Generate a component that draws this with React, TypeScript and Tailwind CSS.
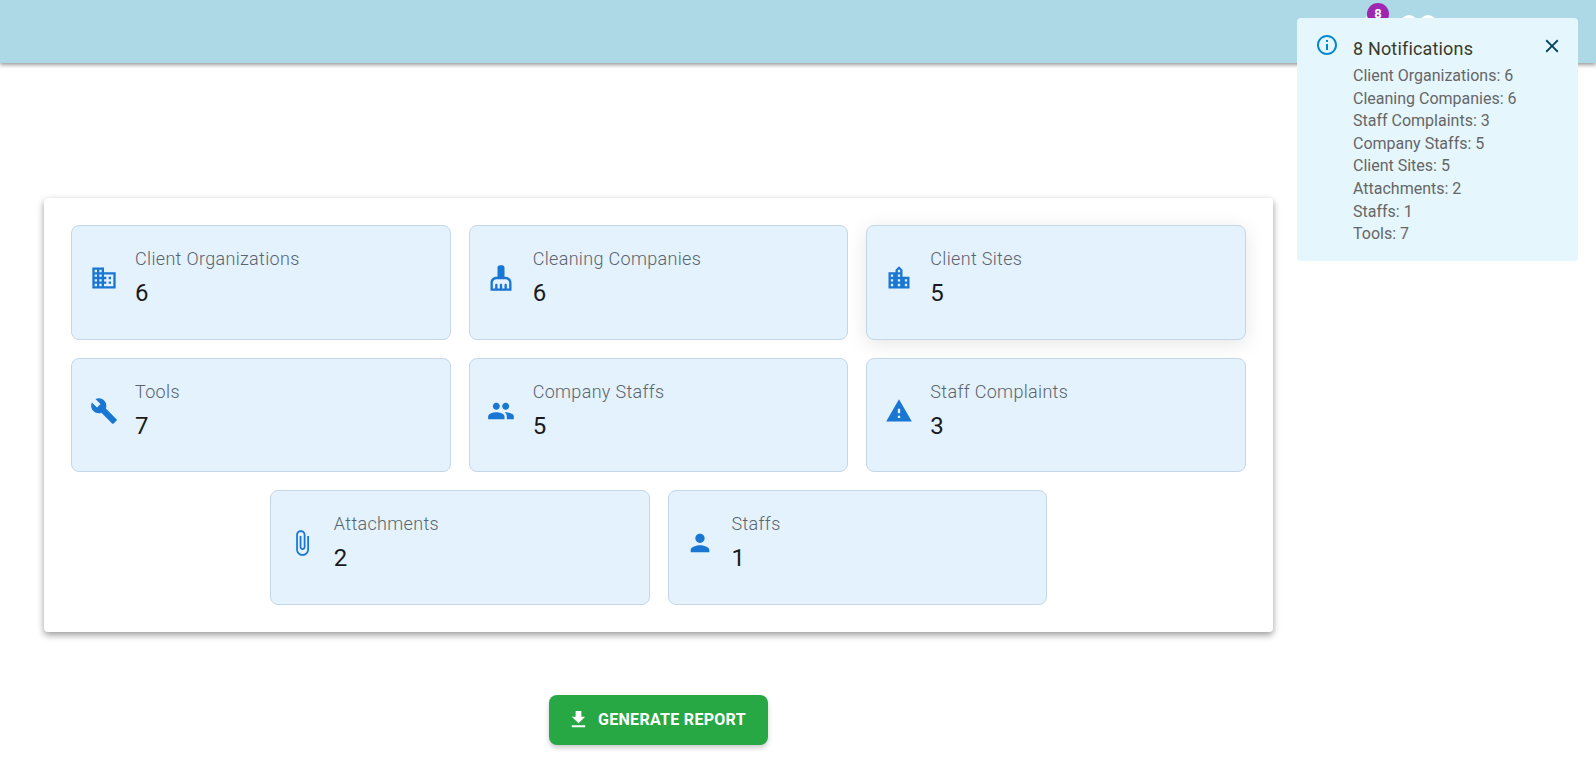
const roboto = '[font-family:Roboto,"Liberation_Sans",sans-serif]';

const paths = {
  business:
    'M12 7V3H2v18h20V7H12zM6 19H4v-2h2v2zm0-4H4v-2h2v2zm0-4H4V9h2v2zm0-4H4V5h2v2zm4 12H8v-2h2v2zm0-4H8v-2h2v2zm0-4H8V9h2v2zm0-4H8V5h2v2zm10 12h-8v-2h2v-2h-2v-2h2v-2h-2V9h8v10zm-2-8h-2v2h2v-2zm0 4h-2v2h2v-2z',
  cleaning:
    'M16 11h-1V3c0-1.1-.9-2-2-2h-2c-1.1 0-2 .9-2 2v8H8c-2.76 0-5 2.24-5 5v7h18v-7c0-2.76-2.24-5-5-5zm3 10h-2v-3c0-.55-.45-1-1-1s-1 .45-1 1v3h-2v-3c0-.55-.45-1-1-1s-1 .45-1 1v3H9v-3c0-.55-.45-1-1-1s-1 .45-1 1v3H5v-5c0-1.65 1.35-3 3-3h8c1.65 0 3 1.35 3 3v5z',
  city:
    'M15 11V5l-3-3-3 3v2H3v14h18V11h-6zm-8 8H5v-2h2v2zm0-4H5v-2h2v2zm0-4H5V9h2v2zm6 8h-2v-2h2v2zm0-4h-2v-2h2v2zm0-4h-2V9h2v2zm0-4h-2V5h2v2zm6 12h-2v-2h2v2zm0-4h-2v-2h2v2z',
  build:
    'M22.7 19l-9.1-9.1c.9-2.3.4-5-1.5-6.9-2-2-5-2.4-7.4-1.3L9 6 6 9 1.6 4.7C.4 7.1.9 10.1 2.9 12.1c1.9 1.9 4.6 2.4 6.9 1.5l9.1 9.1c.4.4 1 .4 1.4 0l2.3-2.3c.5-.4.5-1.1.1-1.4z',
  people:
    'M16 11c1.66 0 2.99-1.34 2.99-3S17.66 5 16 5c-1.66 0-3 1.34-3 3s1.34 3 3 3zm-8 0c1.66 0 2.99-1.34 2.99-3S9.66 5 8 5C6.34 5 5 6.34 5 8s1.34 3 3 3zm0 2c-2.33 0-7 1.17-7 3.5V19h14v-2.5c0-2.33-4.67-3.5-7-3.5zm8 0c-.29 0-.62.02-.97.05 1.16.84 1.97 1.97 1.97 3.45V19h6v-2.5c0-2.33-4.67-3.5-7-3.5z',
  warning: 'M1 21h22L12 2 1 21zm12-3h-2v-2h2v2zm0-4h-2v-4h2v4z',
  attach:
    'M16.5 6v11.5c0 2.21-1.79 4-4 4s-4-1.79-4-4V5c0-1.38 1.12-2.5 2.5-2.5s2.5 1.12 2.5 2.5v10.5c0 .55-.45 1-1 1s-1-.45-1-1V6H10v9.5c0 1.38 1.12 2.5 2.5 2.5s2.5-1.12 2.5-2.5V5c0-2.21-1.79-4-4-4S7 2.79 7 5v12.5c0 3.04 2.46 5.5 5.5 5.5s5.5-2.46 5.5-5.5V6h-1.5z',
  person: 'M12 12c2.21 0 4-1.79 4-4s-1.79-4-4-4-4 1.79-4 4 1.79 4 4 4zm0 2c-2.67 0-8 1.34-8 4v2h16v-2c0-2.66-5.33-4-8-4z',
  download: 'M19 9h-4V3H9v6H5l7 7 7-7zM5 18v2h14v-2H5z',
  info: 'M11 7h2v2h-2zm0 4h2v6h-2zm1-9C6.48 2 2 6.48 2 12s4.48 10 10 10 10-4.48 10-10S17.52 2 12 2zm0 18c-4.41 0-8-3.59-8-8s3.59-8 8-8 8 3.59 8 8-3.59 8-8 8z',
  close: 'M19 6.41 17.59 5 12 10.59 6.41 5 5 6.41 10.59 12 5 17.59 6.41 19 12 13.41 17.59 19 19 17.59 13.41 12z',
  bell: 'M12 22c1.1 0 2-.9 2-2h-4c0 1.1.9 2 2 2zm6-6v-5c0-3.07-1.63-5.64-4.5-6.32V4c0-.83-.67-1.5-1.5-1.5s-1.5.67-1.5 1.5v.68C7.64 5.36 6 7.92 6 11v5l-2 2v1h16v-1l-2-2z',
};

function Icon({ d, className }: { d: string; className: string }) {
  return (
    <svg viewBox="0 0 24 24" fill="currentColor" className={className}>
      <path d={d} />
    </svg>
  );
}

const stats = [
  { label: 'Client Organizations', value: 6, icon: paths.business },
  { label: 'Cleaning Companies', value: 6, icon: paths.cleaning },
  { label: 'Client Sites', value: 5, icon: paths.city, hovered: true },
  { label: 'Tools', value: 7, icon: paths.build },
  { label: 'Company Staffs', value: 5, icon: paths.people },
  { label: 'Staff Complaints', value: 3, icon: paths.warning },
  { label: 'Attachments', value: 2, icon: paths.attach },
  { label: 'Staffs', value: 1, icon: paths.person },
];

const notifications = [
  'Client Organizations: 6',
  'Cleaning Companies: 6',
  'Staff Complaints: 3',
  'Company Staffs: 5',
  'Client Sites: 5',
  'Attachments: 2',
  'Staffs: 1',
  'Tools: 7',
];

function StatCard({ label, value, icon, hovered }: { label: string; value: number; icon: string; hovered?: boolean }) {
  return (
    <div
      className={`flex h-[114.5px] w-[calc((100%-36px)/3)] items-center rounded-lg border border-[#c5d6e6] bg-[#e3f2fd] pt-[18px] pb-[26px] pl-[17.5px] ${
        hovered ? 'shadow-[0_4px_20px_rgba(0,0,0,0.1)]' : ''
      }`}
    >
      <Icon d={icon} className="mr-[17.5px] h-7 w-7 shrink-0 text-[#1976d2]" />
      <div>
        <div className="mt-[1px] text-[18px] leading-[26px] font-light tracking-[0.32px] text-[#5a646c]">{label}</div>
        <div className="mt-[3px] text-2xl leading-9 text-[#1a1a1a]">{value}</div>
      </div>
    </div>
  );
}

export default function App() {
  return (
    <div className={`relative min-h-[764px] bg-white ${roboto}`}>
      <header className="flex h-[63px] justify-end bg-[#add8e6] pt-[14px] pr-[159px] shadow-[0_2px_4px_rgba(0,0,0,0.4)]">
        <div className="relative h-6 w-6 text-white">
          <Icon d={paths.bell} className="h-6 w-6" />
          <span className="absolute -top-[11px] left-[12px] flex h-[22px] w-[22px] items-center justify-center rounded-full bg-[#9c27b0] text-[13px] font-bold text-white">
            8
          </span>
        </div>
        <div className="mt-[1px] ml-[21px] h-[18px] w-[18px] rounded-full bg-white" />
        <div className="mt-[1px] ml-[1px] h-[18px] w-[18px] rounded-full bg-white" />
      </header>

      <main className="ml-[44px] flex w-[1229px] flex-col items-center pt-[135px]">
        <section className="flex w-full flex-wrap justify-center gap-[18px] rounded-[4px] bg-white p-[27px] shadow-[0_3px_7px_rgba(0,0,0,0.4)]">
          {stats.map((s) => (
            <StatCard key={s.label} {...s} />
          ))}
        </section>

        <button className="mt-[63px] flex h-[50px] w-[219px] items-center rounded-lg bg-[#28a745] pl-[18px] text-base font-bold tracking-[0.3px] text-white shadow-[0_3px_5px_rgba(0,0,0,0.2)]">
          <Icon d={paths.download} className="mr-2 h-[23px] w-[23px]" />
          GENERATE REPORT
        </button>
      </main>

      <aside className="absolute top-[18px] right-[18px] flex w-[281px] rounded-[4px] bg-[#e5f6fd] pt-[16px] pr-[15px] pb-[15px] pl-[18px]">
        <Icon d={paths.info} className="mr-[14px] -mt-[1px] h-6 w-6 shrink-0 text-[#0288d1]" />
        <div className="grow">
          <div className="mt-[2px] mb-[3px] text-[18px] leading-[26px] tracking-[0.00938em] text-[#3a3a2a]">8 Notifications</div>
          {notifications.map((n) => (
            <div key={n} className="text-base leading-[22.6px] text-[#666666]">
              {n}
            </div>
          ))}
        </div>
        <Icon d={paths.close} className="mt-[1px] h-[22px] w-[22px] shrink-0 text-[#014361]" />
      </aside>
    </div>
  );
}
